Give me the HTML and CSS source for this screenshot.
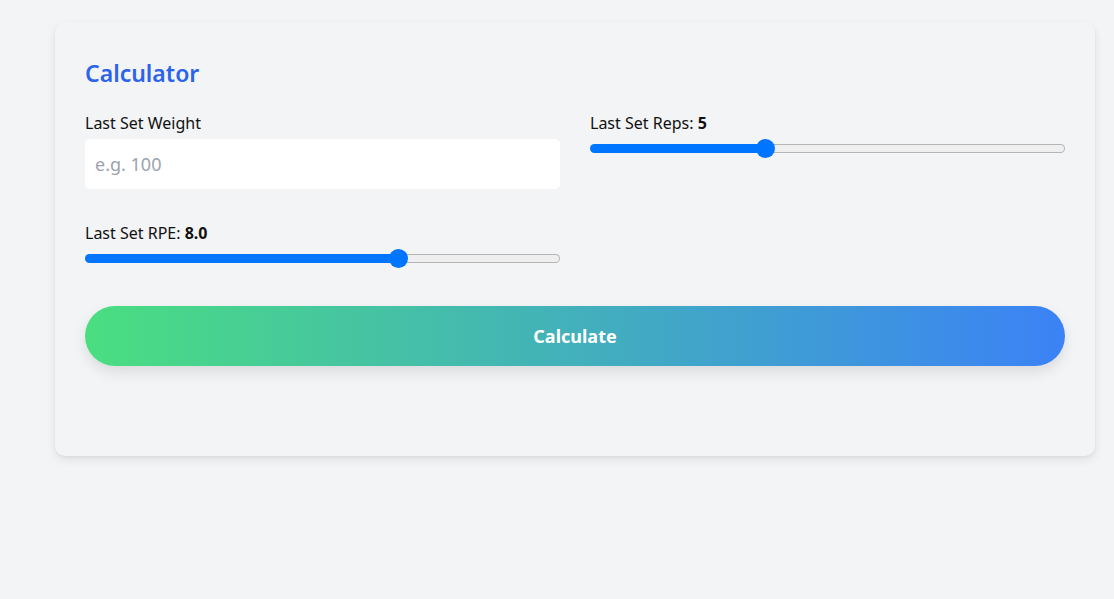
FILE: index.html
```html
<!DOCTYPE html>
<html lang="en">
<head>
<meta charset="utf-8">
<title>Calculator</title>
<link rel="stylesheet" href="styles.css">
</head>
<body>
<main class="page">
  <section class="card">
    <h2 class="title">Calculator</h2>
    <div class="grid">
      <div class="field">
        <label class="label" for="weight">Last Set Weight</label>
        <input class="text-input" id="weight" type="number" placeholder="e.g. 100">
      </div>
      <div class="field">
        <label class="label" for="reps">Last Set Reps: <strong>5</strong></label>
        <input class="range" id="reps" type="range" min="1" max="12" step="1" value="5" style="--p:0.3636">
      </div>
      <div class="field">
        <label class="label" for="rpe">Last Set RPE: <strong>8.0</strong></label>
        <input class="range" id="rpe" type="range" min="4" max="10" step="0.5" value="8" style="--p:0.6667">
      </div>
    </div>
    <button class="calc-btn" type="button">Calculate</button>
    <div class="result"></div>
  </section>
</main>
</body>
</html>
```
FILE: styles.css
```css
* { box-sizing: border-box; }
html, body { margin: 0; padding: 0; }
body {
  background: #f3f4f6;
  font-family: "Noto Sans", "Open Sans", sans-serif;
  color: #111827;
}
.page {
  padding: 22px 19px 40px 55px;
}
.card {
  background: #f3f4f6;
  border-radius: 10px;
  box-shadow: 0 4px 10px rgba(0, 0, 0, 0.08), 0 1px 3px rgba(0, 0, 0, 0.05);
  padding: 33px 30px 30px 30px;
}
.title {
  margin: 0 0 20px 0;
  font-size: 23px;
  line-height: 36px;
  font-weight: 600;
  color: #2b63eb;
}
.grid {
  display: grid;
  grid-template-columns: 1fr 1fr;
  column-gap: 30px;
  row-gap: 32px;
}
.field {
  display: flex;
  flex-direction: column;
}
.label {
  font-size: 16px;
  line-height: 24px;
  margin-bottom: 4px;
  color: #111;
}
.label strong { font-weight: 700; }
.text-input {
  height: 50px;
  border: none;
  border-radius: 5px;
  background: #fff;
  padding: 0 10px;
  font-family: inherit;
  font-size: 18px;
  color: #111;
  outline: none;
}
.text-input::placeholder { color: #9ca3af; }
.text-input::-webkit-outer-spin-button,
.text-input::-webkit-inner-spin-button { -webkit-appearance: none; margin: 0; }
.range {
  -webkit-appearance: none;
  appearance: none;
  width: 100%;
  height: 20px;
  margin: -1px 0 0 0;
  background: transparent;
}
.range::-webkit-slider-runnable-track {
  height: 9px;
  border: 1px solid transparent;
  border-radius: 5px;
  background:
    linear-gradient(#0075ff, #0075ff) 0 0 / calc(9.5px + (100% - 19px) * var(--p)) 100% no-repeat border-box,
    linear-gradient(#efefef, #efefef) padding-box,
    linear-gradient(#b5b5b5, #b5b5b5) border-box;
}
.range::-webkit-slider-thumb {
  -webkit-appearance: none;
  appearance: none;
  width: 19px;
  height: 19px;
  border-radius: 50%;
  background: #0075ff;
  border: none;
  margin-top: -6px;
}
.calc-btn {
  display: block;
  width: 100%;
  height: 60px;
  margin-top: 38px;
  border: none;
  border-radius: 30px;
  background: linear-gradient(90deg, #4ade80, #3b82f6);
  color: #fff;
  font-family: inherit;
  font-size: 18px;
  font-weight: 700;
  box-shadow: 0 6px 14px rgba(0, 0, 0, 0.1);
  cursor: pointer;
}
.result {
  height: 60px;
}
```
